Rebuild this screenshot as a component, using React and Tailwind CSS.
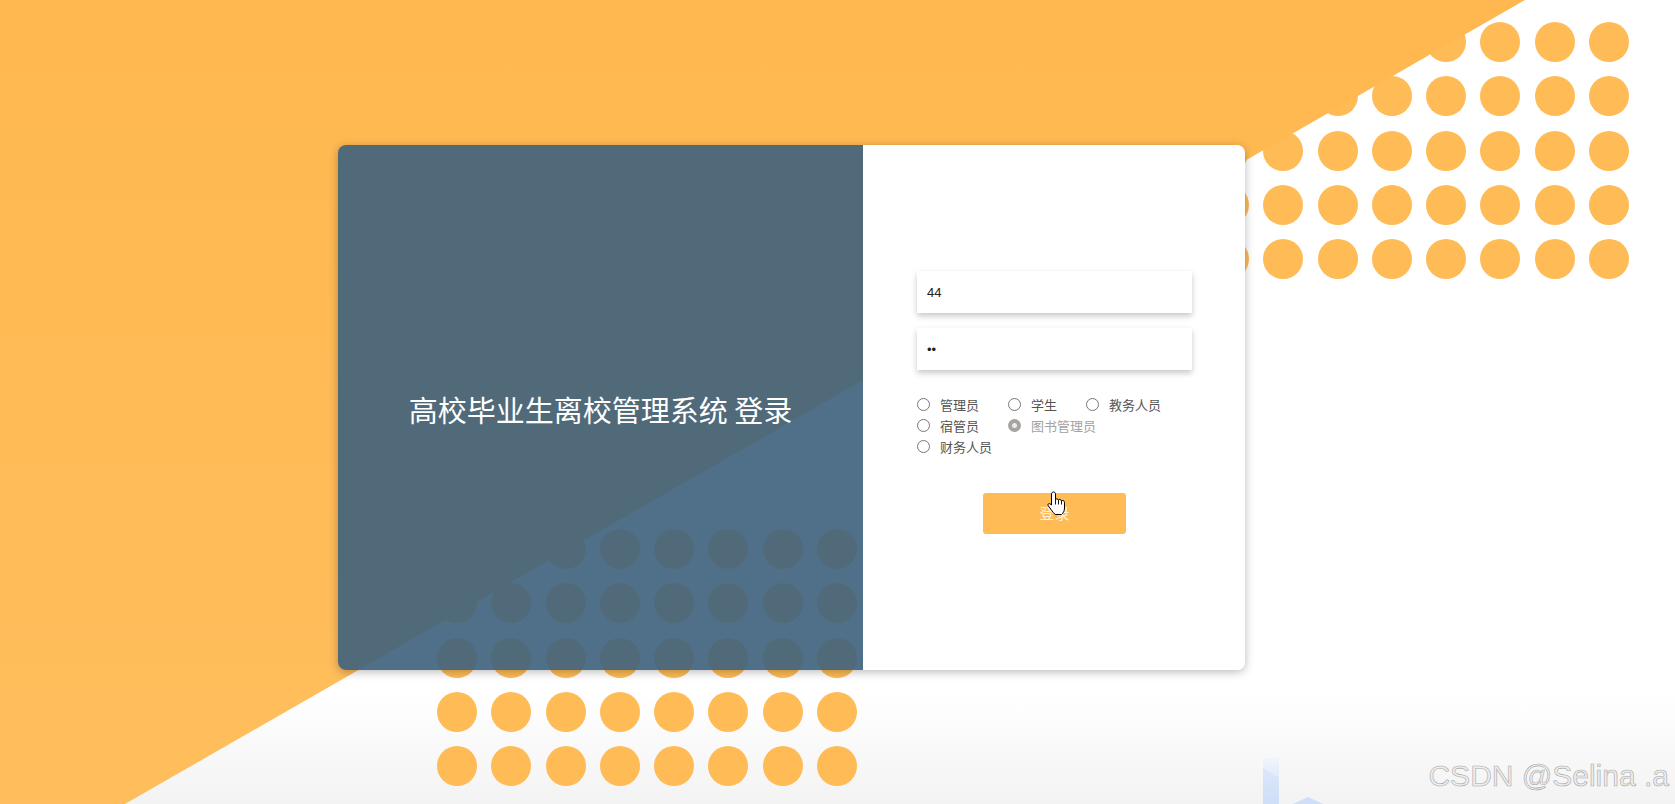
import React from 'react';

const cjk = "font-['Noto_Sans_CJK_SC','Noto_Sans',sans-serif]";

// 8 x 5 grid of orange dots, 40px each
const DotGrid = ({ className }) => (
  <div className={`absolute grid grid-cols-8 gap-[14.3px] ${className}`}>
    {Array.from({ length: 40 }).map((_, i) => (
      <div key={i} className="w-10 h-10 rounded-full bg-[#ffbb55]" />
    ))}
  </div>
);

const Radio = ({ label, checked, width }) => (
  <div className={`flex items-center ${width}`}>
    {checked ? (
      <span className="w-[13px] h-[13px] rounded-full bg-[#a8a3a0] flex items-center justify-center shrink-0">
        <span className="w-[5px] h-[5px] rounded-full bg-[#ececec]" />
      </span>
    ) : (
      <span className="w-[13px] h-[13px] rounded-full border border-[#767676] bg-white shrink-0" />
    )}
    <span className={`ml-[10px] text-[13px] leading-none whitespace-nowrap ${checked ? 'text-[#a3a3a3]' : 'text-[#555555]'}`}>
      {label}
    </span>
  </div>
);

const HandCursor = () => (
  <svg width="20" height="25" viewBox="0 0 20 25" className="absolute left-[64px] top-[-2px]">
    <path
      d="M6.5 1 C7.6 1 8.5 1.8 8.5 3 V8.7 C9.1 7.6 11.1 7.6 11.5 9.1 C12.1 8.1 14.1 8.2 14.5 9.9 C15.1 9.1 17.5 9.2 17.5 11.5 V17 C17.5 20 16.2 22 14.5 23.5 H8.2 C6.6 22.2 5.2 20.3 3.8 18.2 L1.2 14.6 C0.4 13.3 1.7 12 3.1 12.9 L4.5 14 V3 C4.5 1.8 5.4 1 6.5 1 Z"
      fill="white"
      stroke="black"
      strokeWidth="1"
      strokeLinejoin="round"
    />
    <path d="M8.5 8.7 V13.5 M11.5 9.1 V13.5 M14.5 9.9 V13.5" stroke="black" strokeWidth="0.9" />
  </svg>
);

const App = () => {
  return (
    <div className="relative w-full h-[804px] overflow-hidden bg-white">
      {/* background */}
      <div className="absolute inset-x-0 bottom-0 h-[110px] bg-gradient-to-b from-white to-[#f3f3f3]" />
      <DotGrid className="left-[1209px] top-[22px]" />
      <DotGrid className="left-[437px] top-[529px]" />
      <svg className="absolute inset-0 w-full h-full" viewBox="0 0 1675 804" preserveAspectRatio="none">
        <defs>
          <linearGradient id="og" x1="0" y1="0" x2="0" y2="1">
            <stop offset="0" stopColor="#ffb84f" />
            <stop offset="1" stopColor="#ffbe5d" />
          </linearGradient>
        </defs>
        <polygon points="0,0 1525,0 125,804 0,804" fill="url(#og)" />
      </svg>

      {/* faint logo bottom right */}
      <svg width="90" height="54" viewBox="0 0 90 54" className="absolute left-[1255px] top-[750px]">
        <defs>
          <linearGradient id="bl" x1="0" y1="0" x2="0" y2="1">
            <stop offset="0" stopColor="#f1f5fc" />
            <stop offset="1" stopColor="#c9dbf6" />
          </linearGradient>
        </defs>
        <rect x="8" y="8" width="16" height="46" fill="url(#bl)" />
        <polygon points="8,18 24,28 24,54 8,54" fill="#d2e1f8" opacity="0.6" />
        <polygon points="38,54 53,47 68,54" fill="#cfdff7" />
      </svg>

      {/* card */}
      <div className="relative z-10 pt-[145px] pl-[338px]">
        <div className="flex w-[907px] h-[525px] rounded-lg shadow-[0_2px_10px_rgba(0,0,0,0.28)]">
          <div className="w-[525px] h-full rounded-l-lg bg-[#3f627de8] flex items-center justify-center pt-[4px]">
            <h1 className={`${cjk} text-[29px] leading-none text-white font-normal`}>高校毕业生离校管理系统 登录</h1>
          </div>
          <div className={`w-[382px] h-full rounded-r-lg bg-white pt-[126px] pl-[54px] ${cjk}`}>
            <input
              readOnly
              defaultValue="44"
              className="block w-[275px] h-[42px] pl-[10px] bg-white text-[13px] text-[#222] font-['Liberation_Sans',Arial,sans-serif] outline-none shadow-[0_3px_6px_rgba(0,0,0,0.22)]"
            />
            <input
              readOnly
              type="password"
              defaultValue="12"
              className="block mt-[15px] w-[275px] h-[42px] pl-[10px] bg-white text-[13px] text-[#222] font-['Liberation_Sans',Arial,sans-serif] outline-none shadow-[0_3px_6px_rgba(0,0,0,0.22)]"
            />
            <div className="mt-[24px] flex flex-col">
              <div className="flex h-[21px] items-center">
                <Radio label="管理员" width="w-[91px]" />
                <Radio label="学生" width="w-[78px]" />
                <Radio label="教务人员" />
              </div>
              <div className="flex h-[21px] items-center">
                <Radio label="宿管员" width="w-[91px]" />
                <Radio label="图书管理员" checked />
              </div>
              <div className="flex h-[21px] items-center">
                <Radio label="财务人员" />
              </div>
            </div>
            <div className="mt-[36px] w-[275px] flex justify-center">
              <button className="relative w-[143px] h-[41px] rounded-[3px] bg-[#ffbb55] text-[15px] text-white/80">
                登录
                <HandCursor />
              </button>
            </div>
          </div>
        </div>
      </div>

      {/* watermark */}
      <div className="absolute right-[6px] bottom-[13px] z-20 text-[30px] leading-none text-[#eeeeee] font-['Liberation_Sans',Arial,sans-serif] [-webkit-text-stroke:0.6px_#a9a9a9]">
        CSDN @Selina .a
      </div>
    </div>
  );
};

export default App;
